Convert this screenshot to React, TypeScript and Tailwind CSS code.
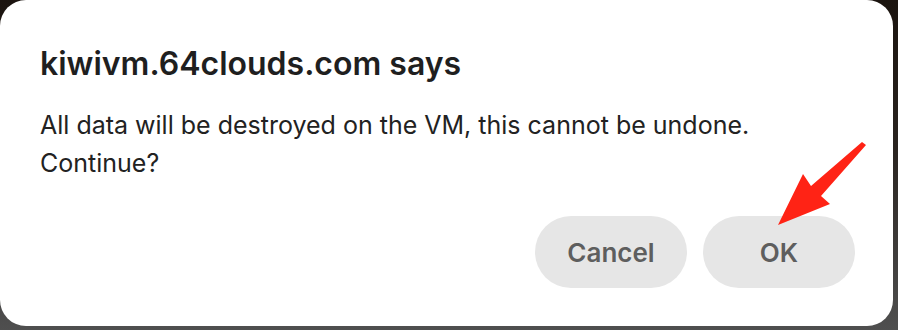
import React from "react";

export default function App() {
  return (
    <div
      className="w-[898px] h-[330px] flex items-start bg-[linear-gradient(180deg,#1b140f_0%,#2a2420_45%,#4f4f4f_100%)]"
      style={{ fontFamily: "Inter, 'Noto Sans', sans-serif" }}
    >
      <div className="relative w-[893px] h-[326px] bg-white rounded-[26px] pl-[40px] pr-[37px] pt-[45px] flex flex-col">
        <h1 className="text-[32px] leading-[38px] font-semibold text-[#1f1f1f]">
          kiwivm.64clouds.com says
        </h1>
        <p className="mt-[23px] text-[25px] leading-[38px] text-[#222222]">
          All data will be destroyed on the VM, this cannot be undone.
          <br />
          Continue?
        </p>
        <div className="mt-[34px] flex justify-end gap-[16px] pr-[1px]">
          <button className="w-[152px] h-[72px] rounded-full bg-[#e6e6e6] text-[26px] font-semibold text-[#5e5e5e]">
            Cancel
          </button>
          <button className="w-[152px] h-[72px] rounded-full bg-[#e6e6e6] text-[26px] font-semibold text-[#5e5e5e]">
            OK
          </button>
        </div>
        <svg
          className="absolute left-0 top-0 pointer-events-none"
          width="893"
          height="326"
          viewBox="0 0 893 326"
        >
          <polygon
            points="778,225 803,174 811,186 862,142 866,145 821,196 830,204"
            fill="#ff2315"
          />
        </svg>
      </div>
    </div>
  );
}
